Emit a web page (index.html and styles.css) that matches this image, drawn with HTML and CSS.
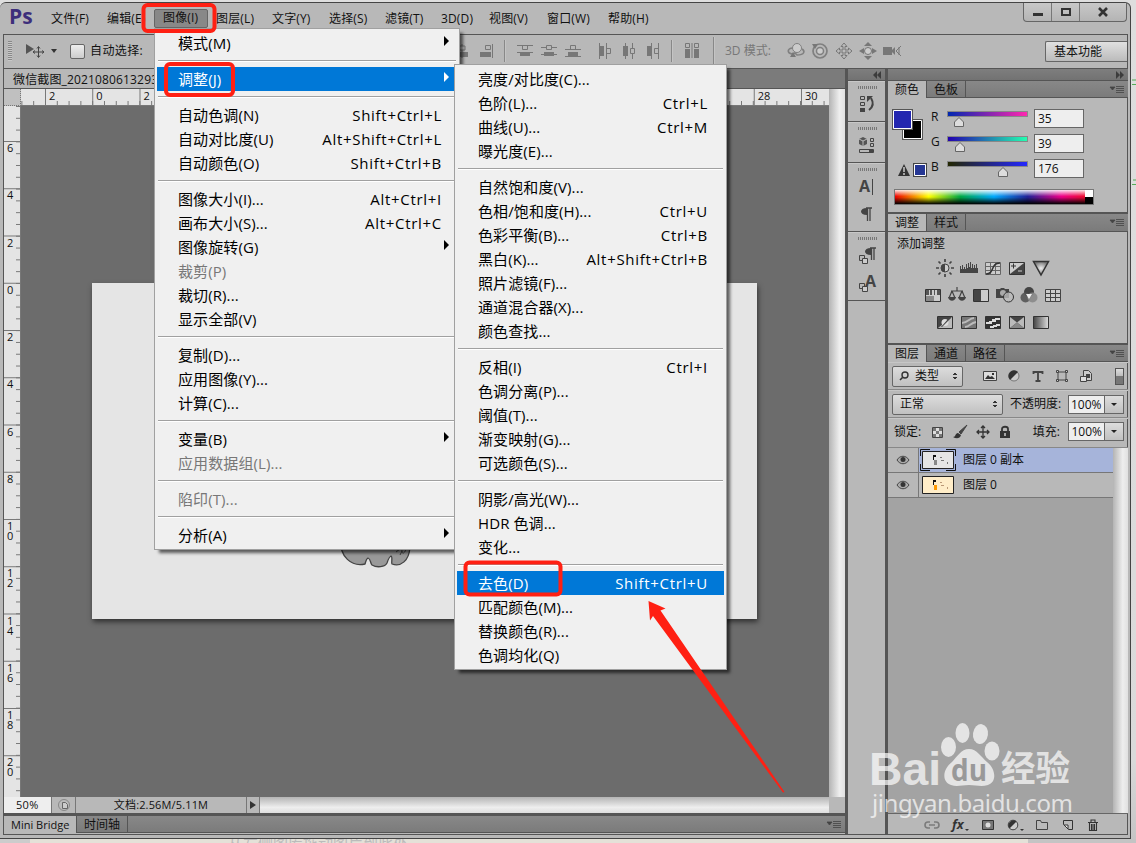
FILE: index.html
```html
<!DOCTYPE html>
<html lang="zh-CN">
<head>
	<meta charset="utf-8">
	<title>Photoshop</title>
	<link rel="stylesheet" href="styles.css">
</head>
<body>

<div class="window">
	<div class="menubar">
		<div class="logo">Ps</div>
		<div class="menus">
			<span>文件(F)</span><span>编辑(E)</span><span class="open">图像(I)</span><span>图层(L)</span><span>文字(Y)</span><span>选择(S)</span><span>滤镜(T)</span><span>3D(D)</span><span>视图(V)</span><span>窗口(W)</span><span>帮助(H)</span>
		</div>
		<div class="controls">
			<span><svg width="12" height="12"><path d="M1 7h10v3H1z" fill="#333"/></svg></span>
			<span><svg width="12" height="12"><path d="M2 3h8v6H2z" fill="none" stroke="#333" stroke-width="2"/></svg></span>
			<span class="close"><svg width="12" height="12"><path d="M2 2l8 8M10 2l-8 8" stroke="#333" stroke-width="2.600"/></svg></span>
		</div>
	</div>

	<div class="frame">
		<div class="options">
			<div class="vgrip"></div>
			<svg class="movetool" width="20" height="16"><path d="M1 1l8 5-8 5z" fill="#555"/><path d="M13.500 4v10M8.500 9h10M12 5.500l1.500-2 1.500 2M12 12.500l1.500 2 1.500-2M10 7.500l-2 1.500 2 1.500M17 7.500l2 1.500-2 1.500" fill="none" stroke="#444"/></svg>
			<span class="tri"></span>
			<span class="check"></span>
			<span class="autosel">自动选择:</span>
			<div class="align">
				<svg width="16" height="16"><path d="M8 1v14" stroke="#777"/><path d="M5 3h6v4H5z" fill="#b8b8b8" stroke="#777"/><path d="M2 9h12v5H2z" fill="#777"/></svg>
				<svg width="16" height="16"><path d="M14.500 1v14M7.500 2.500h5v4h-5z" fill="none" stroke="#777"/><path d="M2 9h11v5H2z" fill="#777"/></svg>
				<i></i>
				<svg width="16" height="16"><path d="M0 2.500h16M0 9.500h16M5.500 2.500h5v4h-5z" fill="none" stroke="#777"/><path d="M3 9h10v4H3z" fill="#777"/></svg>
				<svg width="16" height="16"><path d="M0 4.500h16M0 11.500h16" stroke="#777"/><path d="M5.500 2.500h5v4h-5z" fill="#b8b8b8" stroke="#777"/><path d="M3 9h10v4H3z" fill="#777"/></svg>
				<svg width="16" height="16"><path d="M0 6.500h16M0 13.500h16M5.500 2.500h5v4h-5z" fill="none" stroke="#777"/><path d="M3 9h10v4H3z" fill="#777"/></svg>
				<b></b>
				<svg width="16" height="16"><path d="M2.500 0v16M9.500 0v16M9.500 5.500h4v5h-4z" fill="none" stroke="#777"/><path d="M2 3h5v10H2z" fill="#777"/></svg>
				<svg width="16" height="16"><path d="M4.500 0v16M11.500 0v16" stroke="#777"/><path d="M2 3h5v10H2z" fill="#777"/><path d="M9.500 5.500h4v5h-4z" fill="#b8b8b8" stroke="#777"/></svg>
				<svg width="16" height="16"><path d="M6.500 0v16M13.500 0v16M9.500 5.500h4v5h-4z" fill="none" stroke="#777"/><path d="M2 3h5v10H2z" fill="#777"/></svg>
				<i></i>
				<svg width="16" height="18"><path d="M1.500 1.500h4v4h-4zM10.500 1.500h4v4h-4z" fill="none" stroke="#777"/><path d="M1 7h5v9H1zM10 7h5v9h-5z" fill="#777"/><path d="M8 1v15" stroke="#777"/></svg>
				<i class="tall"></i>
			</div>
			<span class="mode3d">3D 模式:</span>
			<div class="tools3d">
				<svg width="18" height="18"><circle cx="10" cy="6" r="4.500" fill="#ccc" stroke="#808080"/><path d="M5 6C0 7 0 11 5 12l3-1 2 2c8 0 8-4 5-6" fill="none" stroke="#808080" stroke-width="1.600"/><path d="M3 15l6 0-3-5z" fill="#777"/></svg>
				<svg width="18" height="18"><circle cx="9" cy="9" r="7" fill="none" stroke="#808080" stroke-width="1.700"/><circle cx="9" cy="9" r="3.500" fill="#ccc" stroke="#808080" stroke-width="1.500"/><path d="M1 2h6L4 7z" fill="#777"/></svg>
				<svg width="18" height="18"><path d="M9 1l3 3.500h-2V8h3.500V6L17 9l-3.500 3v-2H10v3.500h2L9 17l-3-3.500h2V10H4.500v2L1 9l3.500-3v2H8V4.500H6z" fill="#bbb" stroke="#777"/></svg>
				<svg width="18" height="18"><path d="M9 0l4 4H5zM9 18l4-4H5zM0 9l5-3v6zM18 9l-5-3v6z" fill="#777"/><circle cx="9" cy="9" r="3.500" fill="#ccc" stroke="#777"/></svg>
				<svg width="19" height="18"><path d="M0 5h9v8H0zM8 9l4-4v8z" fill="#777"/><path d="M18 4l-5 5 5 5M16 5v8" fill="none" stroke="#777"/></svg>
			</div>
			<span class="essentials">基本功能</span>
		</div>

		<div class="main">
			<div class="document">
				<div class="doctabs"><span>微信截图_20210806132931</span></div>
				<div class="view">
					<div class="corner"></div>
					<div class="hruler"><span>2</span><span>0</span><span>2</span><span>4</span><span>6</span><span>8</span><span>10</span><span>12</span><span>14</span><span>16</span><span>18</span><span>20</span><span>22</span><span>24</span><span>26</span><span>28</span><span>30</span></div>
					<div class="vscroll"></div>
					<div class="vruler"><span>6</span><span>4</span><span>2</span><span>0</span><span>2</span><span>4</span><span>6</span><span>8</span><span>1<br>0</span><span>1<br>2</span><span>1<br>4</span><span>1<br>6</span><span>1<br>8</span><span>2<br>0</span></div>
					<div class="canvas">
						<div class="paper">
							<svg class="rhino" width="72" height="40"><path d="M1 8c-2 18 11 28 24 25 1-3 1-5 3-6 3 1 2 5 4 7 5 3 13 2 15-2 1-3 2-6 4-7 2 1 0 6 1 8 9 3 17-3 18-17L66 2H4z" fill="#999" stroke="#444" stroke-width="1.300"/><path d="M54 17c3 4 8-1 8 3s3 2 4-2M56 21l4-3M60 24l2-4" fill="none" stroke="#444"/></svg>
						</div>
					</div>
				</div>
				<div class="status">
					<span class="zoom">50%</span>
					<span class="share"><svg width="14" height="14"><circle cx="7" cy="7" r="5.500" fill="#bbb" stroke="#888"/><path d="M5.500 4.500h3l2 2v4h-5z" fill="#ccc" stroke="#666"/></svg></span>
					<span class="docsize">文档:2.56M/5.11M</span>
					<span class="more"></span>
					<span class="hscroll"></span>
					<span class="grow"></span>
				</div>
				<div class="bottomtabs"><span class="on">Mini Bridge</span><span>时间轴</span><svg class="flyout" width="14" height="9"><path d="M0 2h5L2.500 5zM6 1.500h8M6 3.500h8M6 5.500h8M6 7.500h8" fill="#444" stroke="#444" stroke-width=".8"/></svg></div>
			</div>

			<div class="dock">
				<div class="dockhead"><svg width="8" height="8"><path d="M4 0v8L0 4zM8 0v8L4 4z" fill="#3c3c3c"/></svg></div>
				<div class="strip">
					<i></i>
					<svg width="18" height="18"><path d="M2.500 1.500h4v3h-4zM2.500 7.500h4v3h-4z" fill="none" stroke="#444"/><path d="M2 13h5v4H2z" fill="#444"/><path d="M13 3c3 5 2 9-2 12" fill="none" stroke="#444" stroke-width="2"/><path d="M9 7V1h6z" fill="#444"/></svg>
				</div>
				<div class="strip">
					<i></i>
					<svg width="18" height="18"><path d="M1 3l4-2 4 2v5l-4 2-4-2z" fill="#555"/><path d="M1 3l4 2 4-2M5 5v5" fill="none" stroke="#bbb"/><path d="M12.500 2.500h3v3h-3zM12.500 7.500h3v3h-3zM1.500 13.500h14v3h-14z" fill="none" stroke="#444"/><path d="M11 14h4v2h-4z" fill="#444"/></svg>
				</div>
				<div class="strip two">
					<i></i>
					<svg width="18" height="18"><text x="1" y="14" font-size="16" font-weight="bold" fill="#444">A</text><path d="M14.500 1v16" stroke="#444"/></svg>
					<svg width="18" height="18"><path d="M12 2v13M9.500 2v13M8 2h6" stroke="#444" stroke-width="1.300"/><path d="M9 2v7C1 9 1 2 9 2z" fill="#444"/></svg>
				</div>
				<div class="strip two">
					<i></i>
					<svg width="20" height="20"><path d="M16 1v12M13.500 1v12M12 1h6" stroke="#444" stroke-width="1.300"/><path d="M13 1v7C5 8 5 1 13 1z" fill="#444"/><path d="M1.500 8.500h5v5h-5z" fill="none" stroke="#444"/><path d="M4.500 11.500h5v5h-5z" fill="#ccc" stroke="#444"/></svg>
					<svg width="20" height="20"><text x="7" y="12" font-size="16" font-weight="bold" fill="#444">A</text><path d="M1.500 8.500h5v5h-5z" fill="none" stroke="#444"/><path d="M4.500 11.500h5v5h-5z" fill="#ccc" stroke="#444"/></svg>
				</div>
			</div>

			<div class="panels">
				<div class="dockhead"><svg width="8" height="8"><path d="M0 0v8l4-4zM4 0v8l4-4z" fill="#3c3c3c"/></svg></div>

				<div class="panel">
					<div class="tabs"><span class="on">颜色</span><span>色板</span><svg class="flyout" width="14" height="9"><path d="M0 2h5L2.500 5zM6 1.500h8M6 3.500h8M6 5.500h8M6 7.500h8" fill="#444" stroke="#444" stroke-width=".8"/></svg></div>
					<div class="color">
						<div class="swatches">
							<svg width="36" height="76">
								<path d="M11.500 12.500h18v18h-18z" stroke="#555" stroke-width="3"/><path d="M11.500 12.500h18v18h-18z" fill="#000" stroke="#fff"/>
								<path d="M1.500 2.500h18v18h-18z" stroke="#555" stroke-width="3"/><path d="M1.500 2.500h18v18h-18z" fill="#2327b0" stroke="#fff"/>
								<path d="M12 56l6 12H6z" fill="#333"/><path d="M12 59v5M12 65v2" stroke="#ccc" stroke-width="1.500"/>
								<path d="M22.500 56.500h11v11h-11z" stroke="#444" stroke-width="3"/><path d="M22.500 56.500h11v11h-11z" fill="#263794" stroke="#fff"/>
							</svg>
						</div>
						<div class="sliders">
							<div class="slider"><label>R</label><div class="track red"><svg width="12" height="11" style="margin-left: 5px"><path d="M1.500 10.500V6L6 1.500 10.500 6v4.500z" fill="#ddd" stroke="#666"/></svg></div><span class="num">35</span></div>
							<div class="slider"><label>G</label><div class="track green"><svg width="12" height="11" style="margin-left: 6px"><path d="M1.500 10.500V6L6 1.500 10.500 6v4.500z" fill="#ddd" stroke="#666"/></svg></div><span class="num">39</span></div>
							<div class="slider"><label>B</label><div class="track blue"><svg width="12" height="11" style="margin-left: 49px"><path d="M1.500 10.500V6L6 1.500 10.500 6v4.500z" fill="#ddd" stroke="#666"/></svg></div><span class="num">176</span></div>
						</div>
						<div class="spectrum"><i></i></div>
					</div>
				</div>

				<div class="panel adjust">
					<div class="tabs"><span class="on">调整</span><span>样式</span><svg class="flyout" width="14" height="9"><path d="M0 2h5L2.500 5zM6 1.500h8M6 3.500h8M6 5.500h8M6 7.500h8" fill="#444" stroke="#444" stroke-width=".8"/></svg></div>
					<p>添加调整</p>
					<div class="icons">
						<svg width="18" height="18"><circle cx="9" cy="9" r="4" fill="#ccc" stroke="#444"/><path d="M9 5a4 4 0 000 8z" fill="#444"/><path d="M9 0v3M9 15v3M0 9h3M15 9h3M2.500 2.500l2 2M13.500 13.500l2 2M2.500 15.500l2-2M13.500 4.500l2-2" stroke="#444" stroke-width="1.700"/></svg>
						<svg width="18" height="18"><path d="M0 14V7h1v3h1V6h1v4h1V8h1v2h1V5h1v4h1V4h1v4h1V3h1v6h1V5h1v4h1V6h1v3h1V5h1v4h1v5z" fill="#444"/></svg>
						<svg width="18" height="18"><path d="M1.500 3.500h15v12h-15zM6.500 3v12M11.500 3v12M1 7.500h15M1 11.500h15" fill="#ccc" stroke="#666"/><path d="M2 15c9 0 4-11 14-11" fill="none" stroke="#333" stroke-width="1.500"/></svg>
						<svg width="18" height="18"><path d="M1.500 3.500h15v12h-15z" fill="#ccc" stroke="#333"/><path d="M16 4v11H2z" fill="#444"/><path d="M3 7h5M5.500 4.500v5" stroke="#333"/><path d="M10 12h4" stroke="#ccc"/></svg>
						<svg width="18" height="18"><defs><radialGradient id="vib"><stop stop-color="#eee"/><stop offset="1" stop-color="#777"/></radialGradient></defs><path d="M1.500 2.500h15L9 16z" fill="url(#vib)" stroke="#333" stroke-width="1.500"/></svg>
					</div>
					<div class="icons">
						<svg width="18" height="18"><path d="M1.500 3.500h15v12h-15z" fill="#ccc" stroke="#333"/><path d="M2 4h3v5H2zM6 4h2v5H6zM10 4h1v5h-1zM13 4h3v5h-3z" fill="#555"/><path d="M2 10h8v5H2z" fill="#888"/></svg>
						<svg width="18" height="18"><path d="M9 1v4M3 5h12M4 5l-3 7M4 5l3 7M14 5l-3 7M14 5l3 7" fill="none" stroke="#444" stroke-width="1.200"/><path d="M0 11h8c-1 5-7 5-8 0zM10 11h8c-1 5-7 5-8 0z" fill="#444"/></svg>
						<svg width="18" height="18"><path d="M1.500 3.500h15v12h-15z" fill="#ccc" stroke="#333"/><path d="M2 4h7v11H2z" fill="#444"/></svg>
						<svg width="18" height="18"><path d="M0 3h4l1-1h3l1 1h4v9H0z" fill="#444"/><circle cx="7" cy="7" r="3" fill="#aaa"/><circle cx="12.500" cy="11" r="5" fill="#bbb" fill-opacity=".8" stroke="#333"/></svg>
						<svg width="18" height="18"><circle cx="9" cy="6" r="5" fill="#444"/><circle cx="5.500" cy="11.500" r="5" fill="#555" fill-opacity=".9"/><circle cx="12.500" cy="11.500" r="5" fill="#888" fill-opacity=".9"/><path d="M6 8l6 0-3 5z" fill="#eee"/></svg>
						<svg width="18" height="18"><path d="M1.500 3.500h15v12h-15zM6.500 3v12M11.500 3v12M1 7.500h15M1 11.500h15" fill="#ccc" stroke="#444"/></svg>
					</div>
					<div class="icons">
						<svg width="18" height="18"><path d="M1.500 3.500h15v12h-15z" fill="#bbb" stroke="#333"/><path d="M2 4h14L2 15z" fill="#444"/><circle cx="9" cy="9.500" r="3.500" fill="#ddd"/><path d="M5 14l8-9 2 0-9 9z" fill="#444"/></svg>
						<svg width="18" height="18"><path d="M1.500 3.500h15v12h-15z" fill="#777" stroke="#333"/><path d="M2 10c6 0 7-5 12-5M5 14c5 0 5-4 11-5" fill="none" stroke="#bbb" stroke-width="2"/></svg>
						<svg width="18" height="18"><path d="M1.500 3.500h15v12h-15z" fill="#333" stroke="#333"/><path d="M2 9h3V8h3V6h3V5h5v2h-4v2H8v2H2zM6 15v-2h3v-1h3v-1h4v2h-3v1h-3v1z" fill="#ddd"/></svg>
						<svg width="18" height="18"><path d="M1.500 3.500h15v12h-15z" fill="#444" stroke="#333"/><path d="M2 4l7 5.500L2 15zM16 4L9 9.500 16 15z" fill="#bbb"/><path d="M2 15l7-5.500 7 5.500z" fill="#888"/></svg>
						<svg width="18" height="18"><defs><linearGradient id="gm"><stop stop-color="#444"/><stop offset="1" stop-color="#ddd"/></linearGradient></defs><path d="M1.500 3.500h15v12h-15z" fill="url(#gm)" stroke="#333"/></svg>
					</div>
				</div>

				<div class="panel layers">
					<div class="tabs"><span class="on">图层</span><span>通道</span><span>路径</span><svg class="flyout" width="14" height="9"><path d="M0 2h5L2.500 5zM6 1.500h8M6 3.500h8M6 5.500h8M6 7.500h8" fill="#444" stroke="#444" stroke-width=".8"/></svg></div>
					<div class="row filter">
						<span class="select kind"><svg width="12" height="12"><circle cx="7" cy="5" r="3" fill="none" stroke="#333" stroke-width="1.400"/><path d="M4.500 7.500L2 10" stroke="#333" stroke-width="1.600"/></svg>类型<em></em></span>
						<div class="types">
							<svg width="16" height="16"><path d="M1.500 3.500h13v9h-13z" fill="#ddd" stroke="#444"/><path d="M3 11l3-4 2 2 2-1 3 3z" fill="#333"/><path d="M10 5h2v2h-2z" fill="#333"/></svg>
							<svg width="16" height="16"><circle cx="8" cy="8" r="5" fill="#ccc" stroke="#777"/><path d="M4 12A5 5 0 0112 4z" fill="#333"/></svg>
							<svg width="16" height="16"><path d="M3.500 6V4h9v2M8 4v9M5.500 13h5" fill="none" stroke="#444" stroke-width="1.800"/></svg>
							<svg width="16" height="16"><path d="M4 4h8v8H4z" fill="none" stroke="#444"/><path d="M2.500 2.500h2v2h-2zM11.500 2.500h2v2h-2zM2.500 11.500h2v2h-2zM11.500 11.500h2v2h-2z" fill="#ccc" stroke="#444"/></svg>
							<svg width="16" height="16"><path d="M5.500 2.500h5l3 3v7h-8z" fill="#ccc" stroke="#444"/><path d="M2.500 8.500h6v5h-6z" fill="#ddd" stroke="#444"/><path d="M8 6h4v4H8z" fill="#444"/></svg>
						</div>
						<span class="toggle"></span>
					</div>
					<div class="row blend">
						<span class="select normal">正常<em></em></span>
						<label>不透明度:</label>
						<span class="pct"><b>100%</b><i></i></span>
					</div>
					<div class="row lock">
						<label>锁定:</label>
						<div class="locks">
							<svg width="14" height="14"><path d="M2.500 2.500h10v10h-10z" fill="#ddd" stroke="#444"/><path d="M3 3h3v3H3zM9 3h3v3H9zM6 6h3v3H6zM3 9h3v3H3zM9 9h3v3H9z" fill="#777"/></svg>
							<svg width="16" height="16"><path d="M15 1L7 8l2 2z" fill="#444" stroke="#444"/><path d="M1 13c3 0 2-4 5-4l3 2c-1 4-5 4-8 2z" fill="#333"/></svg>
							<svg width="14" height="14"><path d="M7 1v12M1 7h12M5 3l2-2 2 2M5 11l2 2 2-2M3 5L1 7l2 2M11 5l2 2-2 2" fill="none" stroke="#333" stroke-width="1.300"/></svg>
							<svg width="14" height="14"><path d="M2 6h10v7H2z" fill="#333"/><path d="M4 6V4c0-3 6-3 6 0v2" fill="none" stroke="#333" stroke-width="1.800"/><path d="M7 8v3" stroke="#ccc" stroke-width="1.500"/></svg>
						</div>
						<label>填充:</label>
						<span class="pct"><b>100%</b><i></i></span>
					</div>
					<div class="list">
						<div class="items">
							<div class="layer current">
								<span class="eye"><svg width="14" height="10"><path d="M1 5c3-5 9-5 12 0-3 5-9 5-12 0z" fill="#aaa" stroke="#444"/><circle cx="7" cy="4.500" r="2.500" fill="#333"/></svg></span>
								<svg class="thumb" width="38" height="24"><path d="M3.500 3.500h31v17h-31z" fill="#e5e5e5" stroke="#222"/><path d="M1.500 8V1.500H11M27 1.500h9.500V8M1.500 16v6.500H11M27 22.500h9.500V16" fill="none" stroke="#111"/><path d="M14 7h3v2h-2v3h-1z" fill="#111"/><path d="M15 12h3v5h-3z" fill="#888"/><path d="M21 9h2v1h-2zM22 12h3v1h-3zM28 14h1v2h-1z" fill="#777"/></svg>
								图层 0 副本
							</div>
							<div class="layer">
								<span class="eye"><svg width="14" height="10"><path d="M1 5c3-5 9-5 12 0-3 5-9 5-12 0z" fill="#aaa" stroke="#444"/><circle cx="7" cy="4.500" r="2.500" fill="#333"/></svg></span>
								<svg class="thumb" width="38" height="24"><path d="M3.500 3.500h31v17h-31z" fill="#ffedc8" stroke="#222"/><path d="M14 7h3v2h-2v3h-1z" fill="#111"/><path d="M15 12h3v5h-3z" fill="#f90"/><path d="M21 9h2v1h-2zM22 12h3v1h-3zM28 14h1v2h-1z" fill="#b97"/></svg>
								图层 0
							</div>
						</div>
						<div class="vscroll"></div>
					</div>
					<div class="actions">
						<svg width="16" height="14"><path d="M6 4H4a3 3 0 000 6h2M10 4h2a3 3 0 010 6h-2M5 7h6" fill="none" stroke="#7b7b7b" stroke-width="1.600"/></svg>
						<svg width="18" height="16"><text x="1" y="12" font-size="13" font-style="italic" font-weight="bold" fill="#333">fx</text><path d="M14 12h4l-2 2z" fill="#333"/></svg>
						<svg width="14" height="14"><path d="M1.500 2.500h11v9h-11z" fill="#777" stroke="#333"/><circle cx="7" cy="7" r="2.500" fill="#ddd"/></svg>
						<svg width="18" height="16"><circle cx="7" cy="8" r="4.800" fill="#ccc" stroke="#444"/><path d="M3.500 11.500a5 5 0 017-7z" fill="#333"/><path d="M14 12h4l-2 2z" fill="#333"/></svg>
						<svg width="14" height="14"><path d="M1.500 11.500v-9h4l1 2h6v7z" fill="#bbb" stroke="#444"/></svg>
						<svg width="14" height="14"><path d="M2.500 2.500h9v9h-4l-5-5z" fill="#bbb" stroke="#333"/><path d="M3 7h4v4z" fill="#eee" stroke="#333"/></svg>
						<svg width="14" height="14"><path d="M2 4.500h10M5 4V2h4v2M3.500 5v7.500h7V5M5.500 6v6M7 6v6M8.500 6v6" fill="none" stroke="#333" stroke-width="1.100"/></svg>
					</div>
				</div>
			</div>
		</div>
	</div>
</div>

<div class="behind">从左侧图库拖动图片到此处</div>

<div class="popup image-menu">
	<div class="item sub">模式(M)</div>
	<hr>
	<div class="item sub hover">调整(J)</div>
	<hr>
	<div class="item">自动色调(N)<kbd>Shift+Ctrl+L</kbd></div>
	<div class="item">自动对比度(U)<kbd>Alt+Shift+Ctrl+L</kbd></div>
	<div class="item">自动颜色(O)<kbd>Shift+Ctrl+B</kbd></div>
	<hr>
	<div class="item">图像大小(I)...<kbd>Alt+Ctrl+I</kbd></div>
	<div class="item">画布大小(S)...<kbd>Alt+Ctrl+C</kbd></div>
	<div class="item sub">图像旋转(G)</div>
	<div class="item off">裁剪(P)</div>
	<div class="item">裁切(R)...</div>
	<div class="item">显示全部(V)</div>
	<hr>
	<div class="item">复制(D)...</div>
	<div class="item">应用图像(Y)...</div>
	<div class="item">计算(C)...</div>
	<hr>
	<div class="item sub">变量(B)</div>
	<div class="item off">应用数据组(L)...</div>
	<hr>
	<div class="item off">陷印(T)...</div>
	<hr>
	<div class="item sub">分析(A)</div>
</div>

<div class="popup adjust-menu">
	<div class="item">亮度/对比度(C)...</div>
	<div class="item">色阶(L)...<kbd>Ctrl+L</kbd></div>
	<div class="item">曲线(U)...<kbd>Ctrl+M</kbd></div>
	<div class="item">曝光度(E)...</div>
	<hr>
	<div class="item">自然饱和度(V)...</div>
	<div class="item">色相/饱和度(H)...<kbd>Ctrl+U</kbd></div>
	<div class="item">色彩平衡(B)...<kbd>Ctrl+B</kbd></div>
	<div class="item">黑白(K)...<kbd>Alt+Shift+Ctrl+B</kbd></div>
	<div class="item">照片滤镜(F)...</div>
	<div class="item">通道混合器(X)...</div>
	<div class="item">颜色查找...</div>
	<hr>
	<div class="item">反相(I)<kbd>Ctrl+I</kbd></div>
	<div class="item">色调分离(P)...</div>
	<div class="item">阈值(T)...</div>
	<div class="item">渐变映射(G)...</div>
	<div class="item">可选颜色(S)...</div>
	<hr>
	<div class="item">阴影/高光(W)...</div>
	<div class="item">HDR 色调...</div>
	<div class="item">变化...</div>
	<hr>
	<div class="item hover">去色(D)<kbd>Shift+Ctrl+U</kbd></div>
	<div class="item">匹配颜色(M)...</div>
	<div class="item">替换颜色(R)...</div>
	<div class="item">色调均化(Q)</div>
</div>

<!-- red marks and watermark -->
<svg class="overlay" width="1136" height="843">
	<g fill="none" stroke="#ff2013" stroke-width="4">
		<rect x="143.500" y="5" width="71" height="26" rx="4"/>
		<rect x="166" y="64" width="67" height="31" rx="4"/>
		<rect x="465.500" y="562.500" width="95" height="32" rx="4"/>
	</g>
	<path d="M648.500 601l17 7.500-5 2L784.500 792l-1.500 0.500L653 616l-3 4.500z" fill="#ff2013"/>

	<g fill="#fff" fill-opacity=".7">
		<text x="869" y="785" font-size="46" font-weight="bold" textLength="72" lengthAdjust="spacingAndGlyphs" class="bai">Bai</text>
		<ellipse cx="948.500" cy="747" rx="7.500" ry="10"/>
		<ellipse cx="962.500" cy="733" rx="7" ry="10"/>
		<ellipse cx="980.500" cy="734" rx="7.500" ry="10" transform="rotate(8 980 734)"/>
		<ellipse cx="992" cy="751" rx="7.500" ry="9.500"/>
		<path d="M969 749c8 0 12 8 18 13 9 7 10 20 1 23-7 2-12 0-19 0s-12 2-18 0c-10-4-8-16 1-23 5-5 9-13 17-13z"/>
		<text x="1001" y="781" font-size="35" font-weight="bold" textLength="69" lengthAdjust="spacingAndGlyphs">经验</text>
		<text x="872" y="812" font-size="24" textLength="201" class="url">jingyan.baidu.com</text>
	</g>
	<text x="951" y="781" font-size="30" font-weight="bold" fill="#999" textLength="36" lengthAdjust="spacingAndGlyphs">du</text>
	<path d="M1132 80h4M1132 84.500h4M1133 180h3M1132 184.500h4" stroke="#5a5"/>
</svg>

</body>
</html>
```
FILE: styles.css
```css
* {
	box-sizing: border-box;
}
body {
	margin: 0;
	width: 1136px;
	height: 843px;
	overflow: hidden;
	background: linear-gradient(#dedede, #dadada 90%, #c4c4c4);
	font: 12px/16px "Open Sans", "Noto Sans CJK SC", sans-serif;
	color: #111;
}
svg {
	display: block;
	flex: none;
	overflow: visible;
}
.window {
	margin-top: 2px;
	width: 1131px;
	height: 837px;
	padding: 0 2px 3px 3px;
	background: #b8b8b8;
	border-top: 1px solid #444;
	border-right: 1px solid #444;
	border-bottom: 1px solid #444;
	border-radius: 6px 6px 0 0;
}
.frame {
	width: 1125px;
	height: 801px;
	border: 1px solid #555;
}

/* menu bar */
.menubar {
	display: flex;
	height: 31px;
}
.logo {
	width: 39px;
	padding: 2px 0 0 6px;
	font: bold 21px/22px "Open Sans", sans-serif;
	color: #3d2f7b;
}
.menus {
	display: grid;
	grid-template-columns: 56px 56px 53px 56px 57px 56px 56px 48px 58px 61px 60px;
	padding: 7px 0 0 8px;
}
.menus span {
	height: 19px;
	padding-left: 1px;
	line-height: 17px;
	letter-spacing: .15px;
	white-space: nowrap;
}
.menus .open {
	width: 54px;
	margin-left: -8px;
	padding-left: 8px;
	background: #888;
	border: 1px solid #666;
	border-radius: 2px;
	line-height: 16px;
	margin-top: -1px;
}
.controls {
	display: flex;
	width: 104px;
	height: 19px;
	margin-left: 356px;
	border: 1px solid #666;
	border-top: 0;
	border-radius: 0 0 4px 4px;
	background: linear-gradient(#c8c8c8, #b4b4b4);
}
.controls span {
	display: flex;
	justify-content: center;
	align-items: center;
	width: 28px;
	border-right: 1px solid #777;
}
.controls .close {
	flex: 1;
	border: 0;
}

/* options bar */
.options {
	display: flex;
	align-items: center;
	height: 34px;
	padding-bottom: 1px;
	border-bottom: 1px solid #555;
}
.vgrip {
	width: 4px;
	height: 20px;
	margin-left: 4px;
	background: repeating-linear-gradient(#888 0 1px, #c8c8c8 1px 2px);
}
.movetool {
	margin-left: 13px;
}
.tri {
	margin-left: 6px;
	border: 3px solid transparent;
	border-top: 4px solid #333;
	border-bottom: 0;
}
.check {
	width: 15px;
	height: 15px;
	margin-left: 13px;
	border: 1px solid #666;
	border-radius: 2px;
	background: linear-gradient(#eee, #ccc);
}
.autosel {
	width: 365px;
	margin-left: 5px;
	letter-spacing: .4px;
}
.align {
	display: flex;
	align-items: center;
	gap: 8px;
	margin-left: -1px;
}
.align i {
	height: 22px;
	margin: 0 3px 0 2px;
	border-left: 1px solid #888;
	border-right: 1px solid #c4c4c4;
}
.align b {
	width: 0;
}
.align .tall {
	height: 28px;
	margin-left: 5px;
}
.mode3d {
	margin-left: 7px;
	width: 62px;
	color: #777;
}
.tools3d {
	display: flex;
	gap: 6px;
}
.essentials {
	width: 82px;
	height: 21px;
	margin-left: auto;
	padding-left: 8px;
	border: 1px solid #666;
	border-right: 0;
	border-radius: 2px 0 0 2px;
	background: linear-gradient(#e0e0e0, #bbb);
	line-height: 19px;
}

/* document */
.main {
	display: flex;
	height: 765px;
}
.document {
	width: 842px;
	border-right: 1px solid #555;
}
.doctabs {
	display: flex;
	height: 20px;
	background: #7b7b7b;
	border-bottom: 1px solid #555;
}
.doctabs span {
	padding-left: 9px;
	width: 400px;
	background: #b8b8b8;
	line-height: 21px;
	letter-spacing: .15px;
	white-space: nowrap;
	overflow: hidden;
}
.view {
	display: grid;
	grid-template: 17px 691px / 17px 808px 16px;
}
.corner {
	background: #c0c0c0;
	border-right: 1px dotted #777;
	border-bottom: 1px dotted #777;
}
.hruler {
	display: flex;
	padding-left: 28px;
	overflow: hidden;
	font-size: 11px;
	line-height: 13px;
	border-bottom: 1px solid #777;
	background:
		linear-gradient(90deg, #777 1px, transparent 1px) 24px 0 / 47.25px 100% repeat-x,
		linear-gradient(90deg, #777 1px, transparent 1px) .4px 100% / 11.81px 4px repeat-x,
		#e4e4e4;
}
.hruler span {
	flex: 0 0 47.25px;
}
.vruler {
	grid-column: 1;
	padding-top: 37px;
	overflow: hidden;
	font-size: 11px;
	line-height: 10px;
	border-right: 1px solid #777;
	background:
		linear-gradient(#777 1px, transparent 1px) 0 35px / 100% 47.25px repeat-y,
		linear-gradient(#777 1px, transparent 1px) 100% 0 / 4px 11.81px repeat-y,
		#e4e4e4;
}
.vruler span {
	display: block;
	height: 47.25px;
	padding-left: 3px;
}
.view > .vscroll {
	grid-column: 3;
	grid-row: 1 / 3;
}
.vscroll {
	background: linear-gradient(90deg, #b4b4b4, #eee 65%, #e0e0e0);
}
.canvas {
	grid-column: 2;
	grid-row: 2;
	background: #6c6c6c;
	padding: 177px 0 0 71px;
}
.paper {
	position: relative;
	width: 665px;
	height: 336px;
	background: #e5e5e5;
	box-shadow: 1px 3px 5px #333;
}
.rhino {
	position: absolute;
	left: 248px;
	top: 248px;
}
.status {
	display: flex;
	height: 16px;
	line-height: 16px;
	font-size: 11px;
}
.status span {
	border-right: 1px solid #777;
}
.zoom {
	width: 48px;
	padding-left: 12px;
	background: #eee;
	letter-spacing: .3px;
}
.share {
	width: 24px;
	padding: 1px 0 0 5px;
}
.docsize {
	width: 171px;
	text-align: center;
	letter-spacing: .15px;
}
.more {
	width: 13px;
	padding: 4px 3px;
}
.more::before {
	content: "";
	display: block;
	border: 4px solid transparent;
	border-left: 6px solid #333;
	border-right: 0;
}
.status .hscroll {
	width: 569px;
	border: 0;
	background: linear-gradient(#b4b4b4, #eee 65%, #ddd);
}
.status .grow {
	border: 0;
}
.bottomtabs, .tabs {
	display: flex;
	height: 17px;
	background: linear-gradient(#888, #7b7b7b);
	border-bottom: 1px solid #555;
	line-height: 17px;
}
.bottomtabs {
	height: 20px;
	border-top: 3px solid #555;
}
.bottomtabs span, .tabs span {
	padding: 0 7px;
	border-right: 1px solid #555;
	height: 16px;
	white-space: nowrap;
}
.bottomtabs .on, .tabs .on {
	height: 17px;
	background: #b8b8b8;
}
.bottomtabs .on {
	width: 73px;
	font-size: 11px;
}
.bottomtabs .flyout {
	margin: 4px 4px 0 auto;
}

/* icon dock */
.dock {
	width: 42px;
	border-left: 2px solid #555;
	border-right: 3px solid #555;
}
.dockhead {
	display: flex;
	justify-content: flex-end;
	height: 12px;
	padding: 2px 4px 0 0;
	background: linear-gradient(#7e7e7e, #727272);
	border-bottom: 1px solid #555;
}
.dock .dockhead {
	padding-right: 4px;
}
.strip {
	height: 41px;
	padding: 4px 8px 0 10px;
	border-bottom: 1px solid #555;
	border-top: 1px solid #c8c8c8;
}
.strip i {
	display: block;
	width: 20px;
	height: 3px;
	background: repeating-linear-gradient(90deg, #777 0 1px, #b8b8b8 1px 2px);
}
.strip svg {
	margin-top: 6px;
}
.strip.two {
	height: 69px;
}
.strip.two svg {
	height: 20px;
	margin: 7px 0 8px;
}

/* panels */
.panels {
	width: 240px;
}
.panel {
	border-bottom: 2px solid #555;
}
.tabs .flyout {
	margin: 4px 4px 0 auto;
}
.color {
	display: grid;
	grid-template: 80px auto / 43px 1fr;
	height: 114px;
}
.swatches {
	padding: 10px 0 0 4px;
}
.sliders {
	padding-top: 11px;
}
.slider {
	display: flex;
	height: 25px;
}
.slider label {
	width: 16px;
}
.track {
	width: 81px;
	height: 6px;
	margin-top: 2px;
	padding-top: 4px;
	border: 1px solid #888;
}
.red {
	background: linear-gradient(90deg, #0027b0, #ff27b0);
}
.green {
	background: linear-gradient(90deg, #2300b0, #23ffb0);
}
.blue {
	background: linear-gradient(90deg, #232700, #2327ff);
}
.num {
	width: 50px;
	height: 19px;
	margin-left: 6px;
	padding-left: 3px;
	border: 1px solid #666;
	background: #eee;
	line-height: 18px;
}
.spectrum {
	grid-column: 1 / 3;
	width: 200px;
	height: 16px;
	margin: 11px 0 0 6px;
	border: 1px solid #777;
	background:
		linear-gradient(rgba(255, 255, 255, .9), rgba(255, 255, 255, 0) 45%, rgba(0, 0, 0, 0) 50%, #000),
		linear-gradient(90deg, #e00, #ff0 17%, #0a4 33%, #0af 50%, #229 67%, #e08 84%, #e11);
}
.spectrum i {
	display: block;
	width: 8px;
	height: 14px;
	margin-left: auto;
	background: linear-gradient(#fff 50%, #000 50%);
}
.adjust {
	height: 131px;
}
.adjust p {
	margin: 4px 0 7px 9px;
}
.icons {
	display: flex;
	justify-content: center;
	gap: 6px;
	width: 210px;
	margin-bottom: 9px;
}
.adjust .tabs {
	height: 18px;
}
.layers {
	border: 0;
}
.row {
	display: flex;
	align-items: center;
	height: 28px;
	padding: 0 4px;
	border-bottom: 1px solid #888;
	border-top: 1px solid #c6c6c6;
}
.row.lock {
	height: 30px;
	padding-bottom: 3px;
}
.select {
	display: flex;
	align-items: center;
	height: 21px;
	padding-left: 7px;
	border: 1px solid #666;
	border-radius: 2px;
	background: linear-gradient(#ddd, #c0c0c0);
}
.select em {
	width: 6px;
	height: 8px;
	margin: 0 4px 0 auto;
	background: conic-gradient(from 145deg at 50% 0, #333 0 70deg, transparent 0) 0 0 / 6px 3px no-repeat, conic-gradient(from -35deg at 50% 100%, #333 0 70deg, transparent 0) 0 100% / 6px 3px no-repeat;
}
.kind {
	width: 71px;
	padding-left: 5px;
	gap: 5px;
}
.normal {
	width: 111px;
}
.types {
	display: flex;
	gap: 8px;
	margin-left: 19px;
}
.toggle {
	width: 9px;
	height: 17px;
	margin-left: auto;
	border: 1px solid #555;
	background: linear-gradient(#ddd, #bbb 50%, #777 50%);
}
.blend label {
	width: 58px;
	margin-left: 7px;
	white-space: nowrap;
}
.pct {
	display: flex;
	width: 56px;
	height: 19px;
	border: 1px solid #666;
	background: linear-gradient(#ddd, #c0c0c0);
}
.pct b {
	width: 36px;
	padding-left: 2px;
	background: #eee;
	border-right: 1px solid #666;
	font-weight: normal;
	line-height: 18px;
}
.pct i {
	margin: 7px 0 0 6px;
	width: 0;
	height: 0;
	border: 3px solid transparent;
	border-top-color: #222;
}
.lock label {
	margin-left: 2px;
	width: 36px;
}
.locks {
	display: flex;
	align-items: center;
	gap: 8px;
	width: 102px;
}
.list {
	display: flex;
	height: 366px;
	background: #a3a3a3;
	border-bottom: 1px solid #666;
}
.items {
	width: 225px;
}
.list .vscroll {
	width: 15px;
}
.layer {
	display: flex;
	align-items: center;
	height: 25px;
	border-bottom: 1px solid #777;
	background: #b8b8b8;
}
.layer.current {
	background: #a6b4da;
}
.eye {
	display: flex;
	align-items: center;
	height: 24px;
	width: 31px;
	padding-left: 8px;
	background: #b8b8b8;
	border-right: 1px solid #777;
}
.thumb {
	margin-right: 6px;
}
.actions {
	display: flex;
	align-items: center;
	justify-content: space-between;
	height: 20px;
	padding: 2px 28px 0 36px;
}

/* page showing under the window */
.behind {
	height: 4px;
	padding-left: 228px;
	overflow: hidden;
	background: linear-gradient(90deg, #ccc 30px, #e4e1d8 30px 1028px, #c4c4c4 1028px);
	color: #bbb;
	font-size: 15px;
	line-height: 8px;
}

/* drop-down menus */
.popup {
	position: absolute;
	padding: 2px;
	border: 1px solid #a0a0a0;
	background: #f0f0f0;
	box-shadow: 4px 4px 3px -1px rgba(0, 0, 0, .6);
	font-size: 15px;
	color: #000;
}
.image-menu {
	left: 154px;
	top: 28px;
	width: 306px;
	height: 522px;
}
.adjust-menu {
	left: 454px;
	top: 64px;
	width: 273px;
	height: 606px;
}
.popup hr {
	height: 2px;
	margin: 5px 1px;
	border: 0;
	border-top: 1px solid #a0a0a0;
	border-bottom: 1px solid #fff;
}
.item {
	display: flex;
	justify-content: space-between;
	height: 24px;
	padding: 0 16px 0 21px;
	line-height: 25px;
	letter-spacing: .1px;
	white-space: nowrap;
}
.adjust-menu .item {
	line-height: 24px;
}
.image-menu .item {
	padding-right: 15px;
}
.item kbd {
	font: inherit;
	letter-spacing: .7px;
}
.sub::after {
	content: "";
	margin-top: 5px;
	height: 0;
	border: 5px solid transparent;
	border-left-color: #000;
	border-right: 0;
}
.image-menu .sub {
	padding-right: 8px;
}
.off {
	color: #777;
}
.hover {
	background: #0078d7;
	color: #fff;
}
.hover::after {
	border-left-color: #fff;
}

.overlay {
	position: absolute;
	left: 0;
	top: 0;
}
.bai {
	font-family: "Liberation Sans", sans-serif;
}
.url {
	font-family: "Noto Sans", sans-serif;
}
```
